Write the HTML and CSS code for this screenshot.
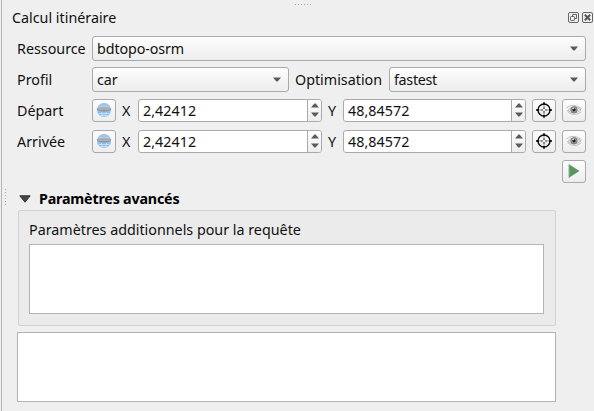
FILE: index.html
```html
<!DOCTYPE html>
<html lang="fr">
<head>
<meta charset="utf-8">
<title>Calcul itinéraire</title>
<link rel="stylesheet" href="styles.css">
</head>
<body>
<svg class="defs" width="0" height="0" aria-hidden="true">
  <defs>
    <symbol id="globe" viewBox="0 0 16 16">
      <circle cx="8" cy="8" r="7" fill="#8cc0ee"/>
      <path d="M2 8.5A6.6 6.9 0 0 1 14 8.5z" fill="#a4a8ab"/>
      <path d="M2.5 11.5h11M4.5 13.5h7M5.5 9.5q.3 3.500 1.500 5M10.500 9.500q-.3 3.500-1.500 5" fill="none" stroke="#d9ecfb" stroke-width=".6"/>
      <path d="M3 4.500h10M5.800 1.800Q4.800 4 4.800 7M8 1v6M10.200 1.800Q11.200 4 11.200 7" fill="none" stroke="#d0d3d5" stroke-width=".6"/>
      <path d="M.6 6.200Q8 7.600 15.400 6.200L14.600 8.300Q8 11 1.400 8.300z" fill="#909498"/>
      <path d="M1.500 7.100Q8 8.800 14.500 7.100" fill="none" stroke="#c2c6c9" stroke-width=".6"/>
    </symbol>
    <symbol id="target" viewBox="0 0 16 16">
      <circle cx="8" cy="8" r="6" fill="none" stroke="#111" stroke-width="1.4"/>
      <path d="M8 .2v3M8 12.800v3M.2 8h3M12.800 8h3" stroke="#111" stroke-width="1.800"/>
      <path d="M8 4.500v2.500M8 9v2.500M4.500 8h2.500M9 8h2.500" stroke="#333" stroke-width="1.100"/>
    </symbol>
    <symbol id="eye" viewBox="0 0 16 16">
      <path d="M1.500 8.500Q8 1.500 15 7.800Q9 13.800 1.500 8.500z" fill="#e4e4e2" stroke="#a5a5a2" stroke-width=".7"/>
      <path d="M.5 5.800Q7 .7 15.500 6.500M1.500 9.500q6.500 5.800 13.500.500" fill="none" stroke="#b0b0ad" stroke-width=".8"/>
      <circle cx="8" cy="7.800" r="3.200" fill="#9a9d9a" stroke="#6a6a6a" stroke-width=".7"/>
      <circle cx="8" cy="7.800" r="1.600" fill="#222"/>
      <circle cx="7.200" cy="6.400" r=".8" fill="#ddd"/>
    </symbol>
    <symbol id="play" viewBox="0 0 16 16">
      <path d="M3 1.200L13.400 8L3 14.800z" fill="#5a9560"/>
      <path d="M3 1.200v13.600" stroke="#8ab28d" stroke-width="1"/>
    </symbol>
    <symbol id="down" viewBox="0 0 8 5"><path d="M0 .5h8L4.600 4.500H3.400z" fill="#5b5b5b"/></symbol>
    <symbol id="up" viewBox="0 0 8 5"><path d="M0 4.500h8L4.600.5H3.400z" fill="#5b5b5b"/></symbol>
  </defs>
</svg>
<main class="dock">
  <div class="grip grip-top"></div>
  <div class="grip grip-left"></div>
  <header class="titlebar">
    <span>Calcul itinéraire</span>
    <span class="window-buttons">
      <svg width="11" height="11" viewBox="0 0 11 11" fill="none" stroke="#666"><rect x=".5" y=".5" width="10" height="10" rx="1.5"/><path d="M4.500 4V2.500h4v4H7"/><rect x="2.500" y="4.500" width="4" height="4" rx=".7"/></svg>
      <svg width="11" height="11" viewBox="0 0 11 11" fill="none" stroke="#666"><rect x=".5" y=".5" width="10" height="10" rx="1.5"/><path d="M2.800 2.800l5.400 5.400M8.200 2.800L2.800 8.200" stroke="#555" stroke-width="2"/></svg>
    </span>
  </header>

  <div class="form">
    <div class="row combo-row">
      <span class="label">Ressource</span>
      <div class="combo wide"><span class="choice">bdtopo-osrm</span><svg class="arrow"><use href="#down"/></svg></div>
    </div>
    <div class="row combo-row">
      <span class="label">Profil</span>
      <div class="combo"><span class="choice">car</span><svg class="arrow"><use href="#down"/></svg></div>
      <span class="mid-label">Optimisation</span>
      <div class="combo"><span class="choice tight">fastest</span><svg class="arrow"><use href="#down"/></svg></div>
    </div>
    <div class="row point-row">
      <span class="label">Départ</span>
      <div class="button"><svg><use href="#globe"/></svg></div>
      <span class="axis">X</span>
      <div class="spin spin-x"><span class="value">2,42412</span><span class="steps"><svg class="arrow"><use href="#up"/></svg><svg class="arrow"><use href="#down"/></svg></span></div>
      <span class="axis axis-y">Y</span>
      <div class="spin"><span class="value">48,84572</span><span class="steps"><svg class="arrow"><use href="#up"/></svg><svg class="arrow"><use href="#down"/></svg></span></div>
      <div class="button gap"><svg><use href="#target"/></svg></div>
      <div class="button gap"><svg><use href="#eye"/></svg></div>
    </div>
    <div class="row point-row">
      <span class="label">Arrivée</span>
      <div class="button"><svg><use href="#globe"/></svg></div>
      <span class="axis">X</span>
      <div class="spin spin-x"><span class="value">2,42412</span><span class="steps"><svg class="arrow"><use href="#up"/></svg><svg class="arrow"><use href="#down"/></svg></span></div>
      <span class="axis axis-y">Y</span>
      <div class="spin"><span class="value">48,84572</span><span class="steps"><svg class="arrow"><use href="#up"/></svg><svg class="arrow"><use href="#down"/></svg></span></div>
      <div class="button gap"><svg><use href="#target"/></svg></div>
      <div class="button gap"><svg><use href="#eye"/></svg></div>
    </div>
    <div class="row run-row">
      <div class="button"><svg><use href="#play"/></svg></div>
    </div>
  </div>

  <section class="advanced">
    <div class="section-title">
      <svg width="12" height="8" viewBox="0 0 12 8"><path d="M.8.8h10.400L6 7.200z" fill="#444" stroke="#333" stroke-width="1" stroke-linejoin="round"/></svg>
      <strong>Paramètres avancés</strong>
    </div>
    <div class="group">
      <div class="group-label">Paramètres additionnels pour la requête</div>
      <div class="text-box"></div>
    </div>
    <div class="text-box result"></div>
  </section>
</main>
</body>
</html>
```
FILE: styles.css
```css
* { box-sizing: border-box; }

body {
  margin: 0;
  background: #efefef;
  color: #111;
  font: 14.3px/20px "Noto Sans", "Open Sans", sans-serif;
  white-space: nowrap;
  overflow: hidden;
}

.defs { position: absolute; }

.dock {
  position: relative;
  height: 411px;
  margin-left: 1px;
  border-left: 1px solid #b4b4b4;
}

.grip { position: absolute; }
.grip-top {
  left: 293px;
  top: 4px;
  width: 17px;
  height: 1px;
  background: repeating-linear-gradient(90deg, #aaa 0 1px, transparent 1px 3px);
}
.grip-left {
  left: 3px;
  top: 189px;
  width: 1px;
  height: 17px;
  background: repeating-linear-gradient(#aaa 0 1px, transparent 1px 3px);
}

.titlebar {
  display: flex;
  justify-content: space-between;
  align-items: center;
  height: 36px;
  padding: 0 1px 0 10px;
}
.window-buttons { display: flex; gap: 3px; }
.window-buttons svg { display: block; margin-bottom: 1px; }

.form { padding: 0 8px 0 15px; }
.row { display: flex; align-items: center; }
.combo-row { height: 25px; margin-bottom: 6px; }
.point-row { height: 23px; margin: 7px 0 8px; }
.run-row { height: 23px; justify-content: flex-end; margin-top: -1px; }
.label { width: 75px; flex: none; }

.combo {
  display: flex;
  align-items: center;
  justify-content: space-between;
  width: 197px;
  height: 25px;
  padding: 0 7px 0 4px;
  border: 1px solid #aaa;
  border-radius: 3px;
  background: linear-gradient(#fdfdfd, #ededed);
}
.wide { width: 494px; }
.choice { letter-spacing: -.1px; }
.tight { letter-spacing: -.3px; }
.mid-label { width: 100px; padding-left: 6px; }

.arrow { display: block; width: 8px; height: 5px; }

.button {
  display: flex;
  align-items: center;
  justify-content: center;
  flex: none;
  width: 24px;
  height: 23px;
  border: 1px solid #aaa;
  border-radius: 3px;
  background: linear-gradient(#fdfdfd, #ededed);
}
.button svg { display: block; width: 16px; height: 16px; margin-bottom: 1px; }
.gap { margin-left: 6px; }

.axis { width: 22px; padding-left: 6px; }
.axis-y { width: 21px; }

.spin {
  display: flex;
  width: 183px;
  height: 23px;
  border: 1px solid #aaa;
  border-radius: 3px;
  background: #fff;
  overflow: hidden;
}
.spin-x { width: 184px; }
.value { flex: 1; padding: 1px 0 0 4px; letter-spacing: .05px; }
.steps {
  display: flex;
  flex-direction: column;
  align-items: center;
  justify-content: center;
  gap: 4px;
  width: 14px;
  padding-bottom: 1px;
  border-left: 1px solid #aaa;
  background: linear-gradient(#fdfdfd, #ededed);
}

.advanced { width: 554px; padding: 5px 0 0 15px; }
.section-title {
  display: flex;
  align-items: center;
  gap: 8px;
  height: 22px;
  padding-left: 2px;
  color: #000;
  letter-spacing: -.2px;
}
.group {
  height: 116px;
  margin-left: 1px;
  padding: 9px 11px 0 10px;
  border: 1px solid #d3d3d3;
  border-radius: 2px;
  background: #ebebeb;
}
.group-label { height: 24px; line-height: 19px; }
.text-box { height: 70px; border: 1px solid #b4b4b4; background: #fff; }
.result { margin-top: 6px; }
```
